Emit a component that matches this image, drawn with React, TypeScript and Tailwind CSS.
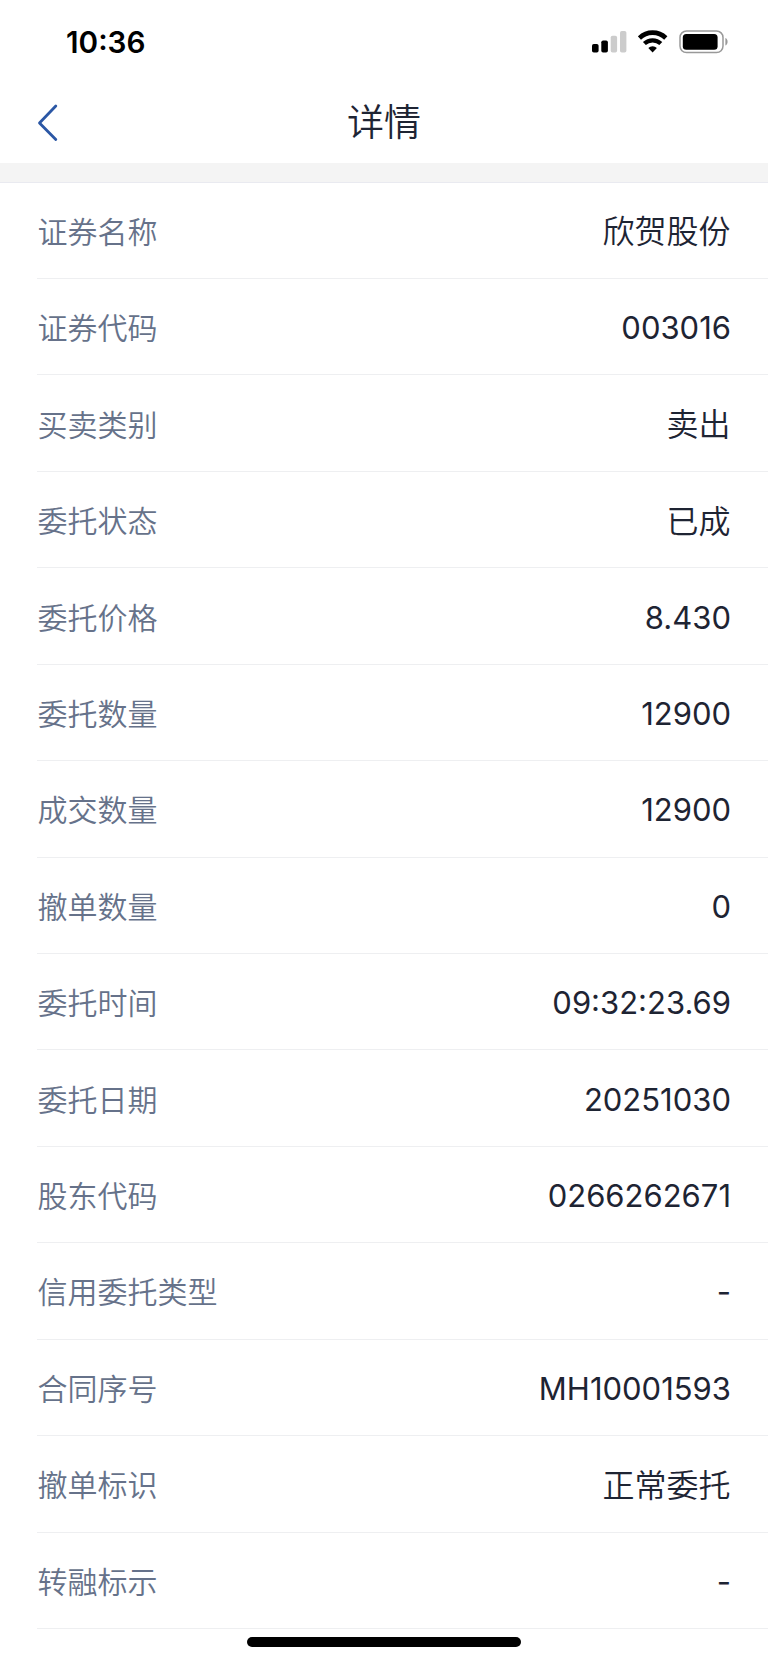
type Field = {
  label: string
  value: string
}

const FIELDS: Field[] = [
  { label: '证券名称', value: '欣贺股份' },
  { label: '证券代码', value: '003016' },
  { label: '买卖类别', value: '卖出' },
  { label: '委托状态', value: '已成' },
  { label: '委托价格', value: '8.430' },
  { label: '委托数量', value: '12900' },
  { label: '成交数量', value: '12900' },
  { label: '撤单数量', value: '0' },
  { label: '委托时间', value: '09:32:23.69' },
  { label: '委托日期', value: '20251030' },
  { label: '股东代码', value: '0266262671' },
  { label: '信用委托类型', value: '-' },
  { label: '合同序号', value: 'MH10001593' },
  { label: '撤单标识', value: '正常委托' },
  { label: '转融标示', value: '-' },
]

export default function App() {
  return (
    <div className="relative flex h-[1663px] w-[768px] flex-col overflow-hidden bg-white font-['Inter','Noto_Sans_CJK_SC',sans-serif] text-[#1e2433]">
      <StatusBar />
      <Header title="详情" />
      <div className="h-5 shrink-0 border-b border-[#e9eaf0] bg-[#f4f4f4]" />

      <dl className="-mt-[0.4px] flex flex-col pl-[37px]">
        {FIELDS.map(field => (
          <FieldRow key={field.label} field={field} />
        ))}
      </dl>

      {/* Home indicator */}
      <div className="absolute bottom-[16px] left-[247px] h-[10px] w-[274px] rounded-full bg-black" />
    </div>
  )
}

function StatusBar() {
  return (
    <div className="flex h-[84px] shrink-0 items-center justify-between pr-[39px] pl-[66px]">
      <span className="pt-[2px] text-[29.7px] leading-none font-semibold text-black">10:36</span>
      <div className="flex items-center">
        <SignalIcon />
        <WifiIcon />
        <BatteryIcon />
      </div>
    </div>
  )
}

function Header({ title }: { title: string }) {
  return (
    <header className="grid h-[79px] shrink-0 grid-cols-[1fr_auto_1fr] items-center px-[37px] pb-[2px]">
      <button className="justify-self-start" aria-label="返回">
        <svg width="22" height="40" viewBox="0 0 22 40" fill="none">
          <path
            d="M18.8 3 L2.5 20 L18.8 36.5"
            stroke="#2b57a5"
            strokeWidth="2.8"
            strokeLinecap="round"
            strokeLinejoin="round"
          />
        </svg>
      </button>
      <h1 className="text-[37px] leading-none font-[350]">{title}</h1>
    </header>
  )
}

function FieldRow({ field }: { field: Field }) {
  const isLatin = /^[\x20-\x7e]+$/.test(field.value)

  return (
    <div className="flex h-[96.43px] items-center justify-between border-b border-[#eeeff1] pt-[2px] pr-[37px]">
      <dt className="pt-px pl-[0.5px] text-[30px] leading-none font-[350] text-[#66728a]">{field.label}</dt>
      <dd className={isLatin ? 'text-[31px] leading-none' : 'pt-[2px] pr-[0.5px] text-[32px] leading-none font-[350]'}>
        {field.value}
      </dd>
    </div>
  )
}

function SignalIcon() {
  return (
    <svg width="35" height="24" viewBox="0 0 35 24">
      <rect x="0" y="14" width="6.6" height="8.6" rx="1.8" fill="#000" />
      <rect x="9.3" y="10.5" width="6.6" height="12.1" rx="1.8" fill="#000" />
      <rect x="18.7" y="5.8" width="6.4" height="16.8" rx="1.8" fill="#ccc" />
      <rect x="28" y="1" width="6.4" height="21.6" rx="1.8" fill="#ccc" />
    </svg>
  )
}

function WifiIcon() {
  return (
    <svg className="ml-[11px]" width="30" height="24" viewBox="0 0 30 24" fill="none">
      <path d="M1.4 8 A19 19 0 0 1 27.8 8" stroke="#000" strokeWidth="4.6" />
      <path d="M6.4 13.6 A11.8 11.8 0 0 1 22.8 13.6" stroke="#000" strokeWidth="4.2" />
      <path d="M10.3 18 A6.4 6.4 0 0 1 18.9 18 L14.6 22.6 Z" fill="#000" />
    </svg>
  )
}

function BatteryIcon() {
  return (
    <svg className="ml-[11px]" width="50" height="24" viewBox="0 0 50 24">
      <rect x="1" y="1" width="43" height="21.6" rx="6.5" fill="none" stroke="#999" strokeWidth="1.5" />
      <rect x="3.8" y="3.9" width="34.8" height="15.8" rx="3.5" fill="#000" />
      <path d="M46.4 8 C49.3 9.2 49.3 14.4 46.4 15.6 Z" fill="#999" />
    </svg>
  )
}
